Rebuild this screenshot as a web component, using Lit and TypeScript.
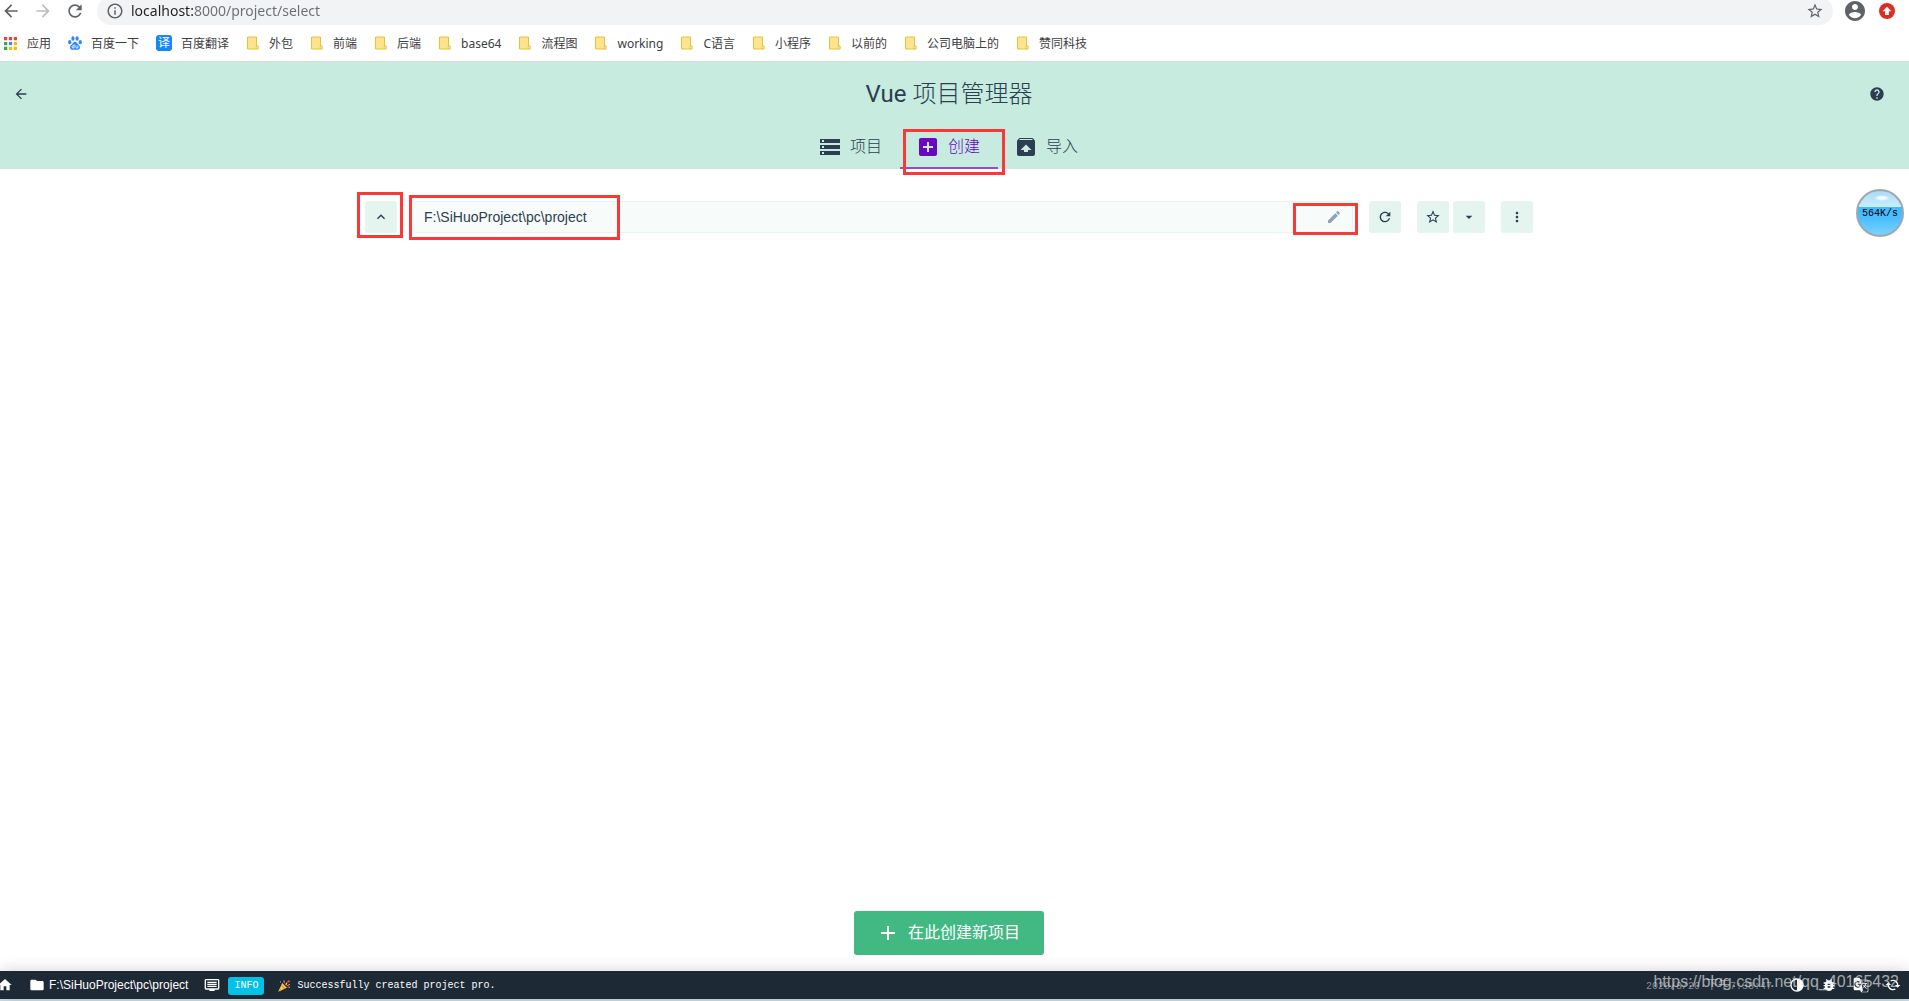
import { LitElement, html, css, svg, nothing } from "lit";
import { customElement, property, state } from "lit/decorators.js";

const ICONS = {
  back: svg`<path d="M20 11H7.83l5.59-5.59L12 4l-8 8 8 8 1.41-1.41L7.83 13H20v-2z"/>`,
  forward: svg`<path d="M12 4l-1.41 1.41L16.17 11H4v2h12.17l-5.58 5.59L12 20l8-8z"/>`,
  refresh: svg`<path d="M17.65 6.35C16.2 4.9 14.21 4 12 4c-4.42 0-7.99 3.58-7.99 8s3.57 8 7.99 8c3.73 0 6.84-2.55 7.73-6h-2.08c-.82 2.33-3.04 4-5.65 4-3.31 0-6-2.69-6-6s2.69-6 6-6c1.66 0 3.14.69 4.22 1.78L13 11h7V4l-2.35 2.35z"/>`,
  info: svg`<path d="M11 17h2v-6h-2v6zm1-15C6.48 2 2 6.48 2 12s4.48 10 10 10 10-4.480 10-10S17.520 2 12 2zm0 18c-4.410 0-8-3.590-8-8s3.590-8 8-8 8 3.590 8 8-3.590 8-8 8zM11 9h2V7h-2v2z"/>`,
  star: svg`<path d="M22 9.240l-7.190-.620L12 2 9.190 8.630 2 9.240l5.460 4.730L5.820 21 12 17.270 18.180 21l-1.630-7.030L22 9.240zM12 15.400l-3.760 2.270 1-4.280-3.320-2.880 4.380-.380L12 6.100l1.710 4.040 4.380.380-3.320 2.880 1 4.280L12 15.400z"/>`,
  account: svg`<path d="M12 2C6.480 2 2 6.480 2 12s4.480 10 10 10 10-4.480 10-10S17.520 2 12 2zm0 3c1.660 0 3 1.340 3 3s-1.340 3-3 3-3-1.340-3-3 1.340-3 3-3zm0 14.200c-2.500 0-4.710-1.280-6-3.220.030-1.990 4-3.080 6-3.080 1.990 0 5.970 1.090 6 3.080-1.290 1.940-3.500 3.220-6 3.220z"/>`,
  update: svg`<circle cx="12" cy="12" r="12" fill="#d93025"/><path fill="#fff" d="M12 5.500l6.500 7h-3.700V18H9.200v-5.500H5.500z"/>`,
  help: svg`<path d="M12 2C6.480 2 2 6.480 2 12s4.480 10 10 10 10-4.480 10-10S17.520 2 12 2zm1 17h-2v-2h2v2zm2.070-7.750l-.900.920C13.450 12.900 13 13.500 13 15h-2v-.500c0-1.100.450-2.100 1.170-2.830l1.240-1.260c.370-.360.590-.860.590-1.410 0-1.100-.900-2-2-2s-2 .900-2 2H8c0-2.210 1.790-4 4-4s4 1.790 4 4c0 .880-.360 1.680-.930 2.250z"/>`,
  storage: svg`<path d="M2 20h20v-4H2v4zm2-3h2v2H4v-2zM2 4v4h20V4H2zm4 3H4V5h2v2zm-4 7h20v-4H2v4zm2-3h2v2H4v-2z"/>`,
  addBox: svg`<path d="M19 3H5c-1.110 0-2 .900-2 2v14c0 1.100.890 2 2 2h14c1.100 0 2-.900 2-2V5c0-1.100-.900-2-2-2zm-2 10h-4v4h-2v-4H7v-2h4V7h2v4h4v2z"/>`,
  unarchive: svg`<path d="M20.550 5.220l-1.390-1.680C18.880 3.210 18.470 3 18 3H6c-.470 0-.880.210-1.150.550L3.460 5.220C3.170 5.570 3 6.010 3 6.500V19c0 1.100.890 2 2 2h14c1.100 0 2-.900 2-2V6.500c0-.490-.170-.930-.450-1.280zM12 9.500l5.500 5.500H14v2h-4v-2H6.500L12 9.500zM5.120 5l.820-1h12l.930 1H5.120z"/>`,
  up: svg`<path d="M7.410 15.410L12 10.830l4.590 4.580L18 14l-6-6-6 6z"/>`,
  edit: svg`<path d="M3 17.250V21h3.750L17.810 9.940l-3.750-3.750L3 17.250zM20.710 7.040c.390-.390.390-1.020 0-1.410l-2.340-2.340c-.390-.390-1.020-.390-1.410 0l-1.830 1.830 3.750 3.750 1.830-1.830z"/>`,
  down: svg`<path d="M7 10l5 5 5-5z"/>`,
  more: svg`<path d="M12 8c1.100 0 2-.900 2-2s-.900-2-2-2-2 .900-2 2 .900 2 2 2zm0 2c-1.100 0-2 .900-2 2s.900 2 2 2 2-.900 2-2-.900-2-2-2zm0 6c-1.100 0-2 .900-2 2s.900 2 2 2 2-.900 2-2-.900-2-2-2z"/>`,
  add: svg`<path d="M19 13h-6v6h-2v-6H5v-2h6V5h2v6h6v2z"/>`,
  home: svg`<path d="M10 20v-6h4v6h5v-8h3L12 3 2 12h3v8z"/>`,
  folder: svg`<path d="M10 4H4c-1.100 0-1.990.900-1.990 2L2 18c0 1.100.900 2 2 2h16c1.100 0 2-.900 2-2V8c0-1.100-.900-2-2-2h-8l-2-2z"/>`,
  log: svg`<path d="M21 3H3c-1.100 0-2 .900-2 2v12c0 1.100.900 2 2 2h5v2h8v-2h5c1.100 0 2-.900 2-2V5c0-1.100-.900-2-2-2zm0 14H3V5h18v12zM5 7h14v2H5zM5 10h14v2H5zM5 13h14v2H5z"/>`,
  party: svg`<path fill="#ffc83d" d="M2 22L9 7l8 8z"/><path fill="#e8912d" d="M5 16l3 4-3 1zM8 10l6 6-2 1-5-5z"/><path fill="#e74856" d="M10 3l3-1 1 5-2 1zM18 13l5 0-1 3-4-1z"/><path fill="#ffc83d" d="M14 9l3-4 1 2-2 4zM17 11l5-3 0 2-4 2z"/><circle cx="20" cy="4" r="2" fill="#e74856"/><circle cx="6" cy="5" r="1" fill="#31d2f7"/>`,
  contrast: svg`<path d="M12 2C6.480 2 2 6.480 2 12s4.480 10 10 10 10-4.480 10-10S17.520 2 12 2zm0 18c-4.420 0-8-3.580-8-8s3.580-8 8-8v16z"/>`,
  bug: svg`<path d="M20 8h-2.810c-.450-.780-1.070-1.450-1.820-1.960L17 4.410 15.590 3l-2.170 2.170C12.960 5.060 12.490 5 12 5c-.490 0-.960.060-1.410.170L8.410 3 7 4.410l1.620 1.630C7.880 6.550 7.260 7.220 6.810 8H4v2h2.090c-.050.330-.090.660-.090 1v1H4v2h2v1c0 .340.040.670.090 1H4v2h2.810c1.040 1.790 2.970 3 5.190 3s4.150-1.210 5.190-3H20v-2h-2.090c.050-.330.090-.660.090-1v-1h2v-2h-2v-1c0-.340-.040-.670-.090-1H20V8zm-6 8h-4v-2h4v2zm0-4h-4v-2h4v2z"/>`,
  translate: svg`<path fill-rule="evenodd" d="M21 4H11l-1-3H3c-1.100 0-2 .900-2 2v15c0 1.100.900 2 2 2h8l1 3h9c1.100 0 2-.900 2-2V6c0-1.100-.900-2-2-2zM7 16c-2.760 0-5-2.240-5-5s2.240-5 5-5c1.350 0 2.480.500 3.350 1.300L9.030 8.570c-.380-.360-1.040-.780-2.030-.780-1.740 0-3.150 1.440-3.150 3.210S5.260 14.210 7 14.210c2.010 0 2.840-1.440 2.920-2.410H7v-1.710h4.680c.070.310.120.610.120 1.020C11.800 13.970 9.890 16 7 16zM22 21c0 .550-.450 1-1 1h-8l2-2-3.700-15H21c.550 0 1 .450 1 1z"/><path d="M13 9h3V8h1v1h4v1h-1c-.4 1.600-1.200 3-2.200 4.200l3 3-.8.800-3-3-1.500 1.500-.4-1.200 1.200-1.200-1.200-1.600.8-.6 1.200 1.400c.8-1 1.400-2 1.700-3.300H13z"/>`,
  loop: svg`<path d="M12 6v3l4-4-4-4v3c-4.420 0-8 3.580-8 8 0 1.570.460 3.030 1.240 4.260L6.700 14.800c-.450-.830-.700-1.790-.700-2.800 0-3.310 2.690-6 6-6zm6.760 1.740L17.300 9.200c.440.840.700 1.790.700 2.800 0 3.310-2.690 6-6 6v-3l-4 4 4 4v-3c4.420 0 8-3.580 8-8 0-1.570-.460-3.030-1.240-4.260z" transform="rotate(90 12 12)"/>`,
  apps: svg`<g><path fill="#ea4335" d="M0 0h6v6H0zM9 0h6v6H9zM18 0h6v6h-6z"/><path fill="#34a853" d="M0 9h6v6H0zM0 18h6v6H0z"/><path fill="#4285f4" d="M9 9h6v6H9z"/><path fill="#fbbc05" d="M18 9h6v6h-6zM9 18h6v6H9zM18 18h6v6h-6z"/></g>`,
  paw: svg`<g fill="#3385ff"><ellipse cx="3" cy="10.500" rx="2.800" ry="3.700"/><ellipse cx="8.500" cy="4.200" rx="2.700" ry="3.900"/><ellipse cx="15.600" cy="4.200" rx="2.700" ry="3.900"/><ellipse cx="21" cy="10.500" rx="2.800" ry="3.700"/><path d="M12 10c-3 0-3.600 3-6 5-2.500 2-3 4-2 6.500 1.200 3 4.500 2 8 2s6.800 1 8-2c1-2.500.500-4.500-2-6.500-2.400-2-3-5-6-5z"/></g><path fill="none" stroke="#fff" stroke-width="1.400" d="M10.500 14v6.500H9a2 2 0 010-4h1.500M13.500 16v3.500q0 1 1 1h2.500V16"/>`,
  mark: svg`<path fill="#fee48c" stroke="#e8c141" stroke-width="2" d="M1 1h18v18h3v6H1z"/><path fill="#fff3c4" stroke="#e8c141" stroke-width="1.500" d="M18.500 19h3.500v6h-3.500z"/>`,
};
type IconName = keyof typeof ICONS;

const icon = (name: IconName, cls = "i16", box = "0 0 24 24") =>
  html`<svg class=${cls} viewBox=${box} fill="currentColor" aria-hidden="true">${ICONS[name]}</svg>`;

@customElement("browser-bar")
class BrowserBar extends LitElement {
  static styles = css`
    :host { display: block; font-family: "Noto Sans", "Noto Sans CJK SC", sans-serif; background: #fff; }
    button { border: 0; padding: 0; background: none; color: inherit; display: flex; }
    svg { display: block; flex: none; }
    .toolbar { display: flex; align-items: flex-end; height: 25px; overflow: hidden; padding: 0 14px 0 1px; gap: 12px; color: #5f6368; }
    .nav { height: 28px; align-items: center; }
    .user { padding-right: 2px; }
    .off { color: #bdbdbd; }
    .address { flex: 1; display: flex; align-items: center; gap: 7px; height: 28px; box-sizing: border-box; padding: 0 9px; border-radius: 14px; background: #f1f3f4; }
    .url { flex: 1; min-width: 0; border: 0; padding: 0; height: 22px; font: 14px/22px "Noto Sans", sans-serif; outline: 0; color: #5f6368;
      -webkit-text-fill-color: transparent; background: linear-gradient(90deg, #202124 64px, #6a6e73 64px); -webkit-background-clip: text; background-clip: text; }
    .i20 { width: 20px; height: 20px; }
    .i18 { width: 18px; height: 18px; }
    .i16 { width: 16px; height: 16px; }
    .marks { display: flex; align-items: center; height: 36px; padding-left: 4px; gap: 18px; border-bottom: 1px solid #d3dcd9; }
    .sites { display: flex; gap: 17px; }
    .mark { display: flex; align-items: center; gap: 10px; font-size: 12px; line-height: 16px; color: #3c4043; text-decoration: none; white-space: nowrap; }
    .label { padding-top: 1px; }
    .tight { gap: 9px; }
    .i13 { width: 13px; height: 13px; }
    .i14 { width: 14px; height: 14px; }
    .file { width: 12px; height: 14px; }
    .badge { width: 16px; height: 16px; border-radius: 3px; background: #1687f7; color: #fff; font-size: 12px; line-height: 16px; text-align: center; }
  `;
  private folders = ["外包", "前端", "后端", "base64", "流程图", "working", "C语言", "小程序", "以前的", "公司电脑上的", "赞同科技"];
  render() {
    return html`
      <div class="toolbar">
        <button class="nav" aria-label="后退">${icon("back", "i20")}</button>
        <button class="nav off" aria-label="前进">${icon("forward", "i20")}</button>
        <button class="nav" aria-label="刷新">${icon("refresh", "i20")}</button>
        <div class="address">
          ${icon("info", "i18")}
          <input class="url" aria-label="地址" .value=${"localhost:8000/project/select"} />
          <button aria-label="收藏">${icon("star", "i18")}</button>
        </div>
        <button class="nav user" aria-label="用户">${icon("account", "i20", "2 2 20 20")}</button>
        <button class="nav" aria-label="更新">${icon("update", "i16")}</button>
      </div>
      <nav class="marks">
        <div class="sites">
          <a class="mark" href="#">${icon("apps", "i13")}<span class="label">应用</span></a>
          <a class="mark tight" href="#">${icon("paw", "i14")}<span class="label">百度一下</span></a>
          <a class="mark tight" href="#"><span class="badge">译</span><span class="label">百度翻译</span></a>
        </div>
        ${this.folders.map((f) => html`<a class="mark" href="#">${icon("mark", "file", "0 0 24 26")}<span class="label">${f}</span></a>`)}
      </nav>`;
  }
}

@customElement("project-header")
class ProjectHeader extends LitElement {
  @state() private active = 1;
  static styles = css`
    :host { display: block; background: #c7ebdf; color: #2c3e50; font-family: Roboto, "Noto Sans CJK SC", sans-serif; padding-right: 11px; }
    svg { display: block; flex: none; }
    button { border: 0; padding: 0; background: none; color: inherit; font: inherit; }
    .top { display: flex; align-items: center; justify-content: space-between; height: 64px; padding: 0 13px; }
    .i16 { width: 16px; height: 16px; }
    .i24 { width: 24px; height: 24px; }
    .title { margin: 0; font-size: 24px; line-height: 32px; font-weight: 300; }
    .brand { font-weight: 400; }
    .tabs { display: flex; justify-content: center; height: 43px; }
    .tab { position: relative; display: flex; align-items: center; gap: 8px; padding: 0 18px 0 16px; font-size: 16px; line-height: 24px; font-weight: 300; border-bottom: 2px solid transparent; }
    .active { color: #6806c1; border-bottom-color: #8b4fcf; }
    .frame { position: absolute; inset: 3px -7px -8px 3px; border: 3px solid #fb3838; pointer-events: none; }
  `;
  render() {
    const tabs: [IconName, string][] = [["storage", "项目"], ["addBox", "创建"], ["unarchive", "导入"]];
    return html`
      <div class="top">
        <button aria-label="返回">${icon("back")}</button>
        <h1 class="title"><span class="brand">Vue</span> 项目管理器</h1>
        <button aria-label="帮助">${icon("help")}</button>
      </div>
      <div class="tabs" role="tablist">
        ${tabs.map(([ic, label], i) => html`
          <button class="tab ${i === this.active ? "active" : ""}" role="tab" aria-selected=${i === this.active} @click=${() => (this.active = i)}>
            ${icon(ic, "i24")}<span>${label}</span>${i === 1 ? html`<span class="frame"></span>` : nothing}
          </button>`)}
      </div>`;
  }
}

@customElement("folder-explorer")
class FolderExplorer extends LitElement {
  @property() path = "";
  static styles = css`
    :host { display: flex; flex-direction: column; color: #2c3e50; font-family: "Liberation Sans", "Noto Sans CJK SC", sans-serif; padding-right: 11px; }
    svg { display: block; flex: none; width: 16px; height: 16px; }
    button { border: 0; padding: 0; background: none; color: inherit; font: inherit; display: flex; align-items: center; justify-content: center; }
    .bar { width: 100%; max-width: 1200px; box-sizing: border-box; margin: 0 auto; padding: 32px 16px; display: flex; gap: 16px; }
    .tool { position: relative; width: 32px; height: 32px; flex: none; border-radius: 3px; background: #e4f5ef; }
    .pair { display: flex; gap: 4px; }
    .field { position: relative; flex: 1; display: flex; align-items: center; height: 32px; box-sizing: border-box; border: 1px solid #e4f5ef; border-radius: 3px; background: #f7fbfa; padding: 0 10px; }
    .path { flex: 1; min-width: 0; border: 0; padding: 0; background: none; outline: 0; color: inherit; font: 14px/20px "Liberation Sans", sans-serif; }
    .edit { color: #8ba2c2; }
    .frame { position: absolute; border: 3px solid #fb3838; pointer-events: none; }
    .around { inset: -9px -6px -5px -8px; }
    .left { left: -5px; top: -7px; width: 205px; height: 39px; }
    .right { right: -6px; top: 1px; width: 59px; height: 26px; }
    .create { margin: auto auto 16px; height: 44px; padding: 0 24px 0 22px; gap: 8px; border-radius: 3px; background: #42b983; color: #fff; font: 16px/24px Roboto, "Noto Sans CJK SC", sans-serif; }
    .create svg { width: 24px; height: 24px; }
  `;
  render() {
    return html`
      <div class="bar">
        <button class="tool" aria-label="上级目录">${icon("up")}<span class="frame around"></span></button>
        <div class="field">
          <input class="path" aria-label="路径" readonly .value=${this.path} />
          <button class="edit" aria-label="编辑">${icon("edit")}</button>
          <span class="frame left"></span><span class="frame right"></span>
        </div>
        <button class="tool" aria-label="刷新">${icon("refresh")}</button>
        <div class="pair">
          <button class="tool" aria-label="收藏">${icon("star")}</button>
          <button class="tool" aria-label="收藏夹">${icon("down")}</button>
        </div>
        <button class="tool" aria-label="更多">${icon("more")}</button>
      </div>
      <button class="create">${icon("add")}<span>在此创建新项目</span></button>`;
  }
}

@customElement("status-bar")
class StatusBar extends LitElement {
  @property() path = "";
  static styles = css`
    :host { display: block; background: #cfe0e6; padding-bottom: 2px; }
    svg { display: block; flex: none; }
    button { border: 0; padding: 0; background: none; color: inherit; font: inherit; display: flex; align-items: center; }
    .bar { position: relative; display: flex; align-items: center; height: 28px; padding: 0 8px 0 0; background: #1d2935; color: #fff; box-shadow: 0 0 16px rgba(0, 0, 0, 0.18); font: 12px/16px "Liberation Sans", sans-serif; white-space: nowrap; }
    .home { margin-left: -3px; }
    .i16 { width: 16px; height: 16px; }
    .i14 { width: 14px; height: 14px; }
    .folder { margin-left: 16px; gap: 4px; }
    .log { margin-left: 16px; gap: 8px; font-family: "Liberation Mono", "Noto Sans CJK SC", monospace; font-size: 10px; }
    .tag { margin-top: 2px; padding: 1px 6px; border-radius: 3px; background: #03c2e6; }
    .text { display: flex; align-items: center; gap: 6px; margin-top: 2px; padding-left: 5px; }
    .date { margin-left: auto; margin-right: 17px; padding-top: 2px; font: 10px/16px "Liberation Mono", "Noto Sans CJK SC", monospace; color: #848b92; }
    .half { font-size: 12px; }
    .tools { display: flex; gap: 16px; }
    .credit { position: absolute; right: 10px; top: 1px; font: 16px/20px "Liberation Sans", sans-serif; color: rgba(225, 225, 225, 0.7); }
  `;
  render() {
    const tools: [IconName, string][] = [["contrast", "切换主题"], ["bug", "报告问题"], ["translate", "翻译"], ["loop", "刷新"]];
    return html`
      <footer class="bar">
        <button class="home" aria-label="主页">${icon("home")}</button>
        <button class="folder">${icon("folder")}${this.path}</button>
        <button class="log">
          ${icon("log")}<span class="tag">INFO</span>
          <span class="text">${icon("party", "i14")}Successfully created project pro.</span>
        </button>
        <span class="date">2020/8/20 <span class="half">下午</span>7:38:47</span>
        <span class="tools">${tools.map(([ic, label]) => html`<button aria-label=${label}>${icon(ic)}</button>`)}</span>
        <span class="credit">https://blog.csdn.net/qq_40165432</span>
      </footer>`;
  }
}

@customElement("app-root")
class AppRoot extends LitElement {
  private path = "F:\\SiHuoProject\\pc\\project";
  static styles = css`
    :host { position: relative; display: flex; flex-direction: column; min-height: 100vh; background: #fff; overflow: hidden; }
    .main { flex: 1; }
    .speed { position: absolute; right: 5px; top: 189px; width: 48px; height: 48px; box-sizing: border-box; border: 2px solid #9fa9ad; border-radius: 50%;
      background: radial-gradient(ellipse 8px 3px at 24px 7px, #f4fcff 40%, transparent), linear-gradient(#a9dcf7, #c9eefb 16px, #3fb9fd 16px, #4cc0ff 28px, #7dd1fd);
      display: flex; align-items: center; justify-content: center; padding-top: 2px; font: 10px/16px "Liberation Mono", monospace; color: #000; }
  `;
  render() {
    return html`
      <browser-bar></browser-bar>
      <project-header></project-header>
      <folder-explorer class="main" .path=${this.path}></folder-explorer>
      <status-bar .path=${this.path}></status-bar>
      <div class="speed">564K/s</div>`;
  }
}
